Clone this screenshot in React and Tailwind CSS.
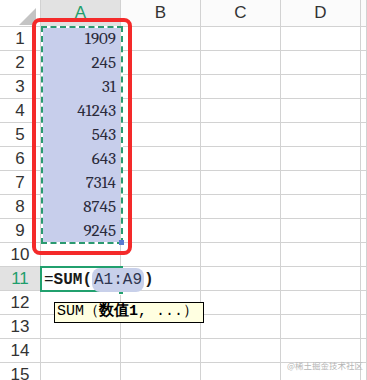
import React from 'react';

const values = [1909, 245, 31, 41243, 543, 643, 7314, 8745, 9245];
const columns = ['A', 'B', 'C', 'D', ''];
const rowCount = 15;

const line = 'border-r border-b border-[#d2d2d2]';
const mono = 'font-mono [font-family:Liberation_Mono,Noto_Sans_CJK_SC,monospace]';

const HeaderRow = () => (
  <>
    <div className={`relative bg-white ${line}`}>
      <svg className="absolute inset-0" width="41" height="27" viewBox="0 0 41 27">
        <polygon points="19,25 36,8 36,25" fill="#c4c4c4" />
      </svg>
    </div>
    {columns.map((c) => (
      <div
        key={c || 'E'}
        className={`flex items-center justify-center text-[17px] ${line} ${
          c === 'A' ? 'bg-[#e2e2e2] text-[#1f9e6c]' : 'bg-[#fbfbfb] text-[#333]'
        }`}
      >
        {c}
      </div>
    ))}
  </>
);

const Row = ({ n }) => {
  const active = n === 11;
  const selected = n <= 9;
  return (
    <>
      <div
        className={`flex items-center justify-center text-[17px] ${line} ${
          active ? 'bg-[#e2e2e2] text-[#1f9e6c]' : 'bg-white text-[#333]'
        }`}
      >
        {n}
      </div>
      <div
        className={
          selected
            ? 'flex items-center justify-end pr-[4px] bg-[#c7ceeb] border-r border-[#d2d2d2] text-[17px] text-[#2a2a3a] font-serif [font-family:Liberation_Serif,serif]'
            : line
        }
      >
        {selected ? values[n - 1] : null}
      </div>
      <div className={line} />
      <div className={line} />
      <div className={line} />
      <div className={line} />
    </>
  );
};

export default function App() {
  return (
    <div className="relative w-[367px] h-[380px] overflow-hidden bg-white [font-family:Liberation_Sans,sans-serif]">
      <div className="grid grid-cols-[41px_80px_80px_80px_80px_6px] grid-rows-[27px_repeat(15,24px)]">
        <HeaderRow />
        {Array.from({ length: rowCount }, (_, i) => (
          <Row key={i} n={i + 1} />
        ))}
      </div>

      {/* copy range marching ants */}
      <div className="absolute left-[41px] top-[26px] w-[82px] h-[218px] border-2 border-white" />
      <div className="absolute left-[41px] top-[26px] w-[82px] h-[218px] border-2 border-dashed border-[#2a9a70]" />
      <div className="absolute left-[119px] top-[240px] w-[5px] h-[5px] bg-[#5a7bd0]" />

      {/* red highlight */}
      <div className="absolute left-[32px] top-[18px] w-[100px] h-[237px] border-4 border-[#f42a2a] rounded-[8px]" />

      {/* active cell A11 */}
      <div className="absolute left-[40px] top-[266px] w-[83px] h-[26px] border-2 border-[#21a06e]" />
      <div className="absolute left-[118px] top-[289px] w-[6px] h-[6px] bg-[#21a06e] border border-white" />
      <div className={`absolute left-[44px] top-[268px] h-[23px] flex items-center text-[16px] text-[#1a1a1a] ${mono}`}>
        <span>=</span>
        <span className="font-bold">SUM(</span>
        <span className="bg-[#c8d0ea] rounded-[8px] px-[2px] text-[#2e3550]">A1:A9</span>
        <span className="font-bold">)</span>
      </div>

      {/* function hint */}
      <div className={`absolute left-[54px] top-[302px] w-[150px] h-[21px] border border-black bg-[#ffffe1] flex items-center pl-[2px] text-[15px] text-black whitespace-nowrap ${mono}`}>
        <span>SUM（</span>
        <span className="font-bold">数值1</span>
        <span>, ...）</span>
      </div>

      <div className="absolute left-[287px] top-[359px] text-[8.5px] text-[#b5b5b5] whitespace-nowrap [font-family:Noto_Sans_CJK_SC,sans-serif]">
        @稀土掘金技术社区
      </div>
    </div>
  );
}
